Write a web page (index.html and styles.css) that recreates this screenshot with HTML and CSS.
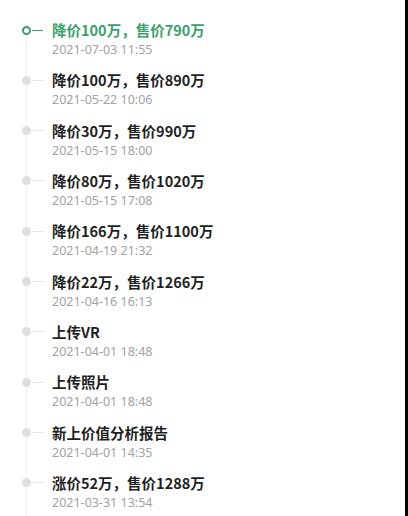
FILE: index.html
```html
<!DOCTYPE html>
<html lang="zh-CN">
<head>
<meta charset="utf-8">
<link rel="stylesheet" href="styles.css">
</head>
<body>
<div class="screen">
  <ul class="timeline">
    <li class="item current">
      <div class="rail"><div class="marker"><span class="node"></span><span class="dash"></span></div></div>
      <div class="content"><div class="title">降价100万，售价790万</div><div class="date">2021-07-03 11:55</div></div>
    </li>
    <li class="item">
      <div class="rail"><div class="marker"><span class="node"></span><span class="dash"></span></div></div>
      <div class="content"><div class="title">降价100万，售价890万</div><div class="date">2021-05-22 10:06</div></div>
    </li>
    <li class="item">
      <div class="rail"><div class="marker"><span class="node"></span><span class="dash"></span></div></div>
      <div class="content"><div class="title">降价30万，售价990万</div><div class="date">2021-05-15 18:00</div></div>
    </li>
    <li class="item">
      <div class="rail"><div class="marker"><span class="node"></span><span class="dash"></span></div></div>
      <div class="content"><div class="title">降价80万，售价1020万</div><div class="date">2021-05-15 17:08</div></div>
    </li>
    <li class="item">
      <div class="rail"><div class="marker"><span class="node"></span><span class="dash"></span></div></div>
      <div class="content"><div class="title">降价166万，售价1100万</div><div class="date">2021-04-19 21:32</div></div>
    </li>
    <li class="item">
      <div class="rail"><div class="marker"><span class="node"></span><span class="dash"></span></div></div>
      <div class="content"><div class="title">降价22万，售价1266万</div><div class="date">2021-04-16 16:13</div></div>
    </li>
    <li class="item">
      <div class="rail"><div class="marker"><span class="node"></span><span class="dash"></span></div></div>
      <div class="content"><div class="title">上传VR</div><div class="date">2021-04-01 18:48</div></div>
    </li>
    <li class="item">
      <div class="rail"><div class="marker"><span class="node"></span><span class="dash"></span></div></div>
      <div class="content"><div class="title">上传照片</div><div class="date">2021-04-01 18:48</div></div>
    </li>
    <li class="item">
      <div class="rail"><div class="marker"><span class="node"></span><span class="dash"></span></div></div>
      <div class="content"><div class="title">新上价值分析报告</div><div class="date">2021-04-01 14:35</div></div>
    </li>
    <li class="item">
      <div class="rail"><div class="marker"><span class="node"></span><span class="dash"></span></div></div>
      <div class="content"><div class="title">涨价52万，售价1288万</div><div class="date">2021-03-31 13:54</div></div>
    </li>
  </ul>
</div>
</body>
</html>
```
FILE: styles.css
```css
html, body {
  margin: 0;
  padding: 0;
  background: #fff;
}
.screen {
  width: 405px;
  height: 516px;
  border-right: 3px solid #000;
  overflow: hidden;
  background: #fff;
}
.timeline {
  list-style: none;
  margin: 0;
  padding: 20px 0 0 0;
}
.item {
  display: flex;
  height: 50.33px;
}
.rail {
  width: 52px;
  flex: none;
  background: linear-gradient(#f0f0f0, #f0f0f0) no-repeat 26px 0 / 1px 100%;
}
.current .rail {
  background-position: 26px 15px;
}
.marker {
  height: 20px;
  display: flex;
  align-items: center;
  padding-left: 22px;
}
.node {
  width: 9px;
  height: 9px;
  border-radius: 50%;
  background: #dfdfdf;
  box-sizing: border-box;
  flex: none;
}
.dash {
  width: 11px;
  height: 1px;
  margin-left: 2px;
  background: #e5e5e5;
}
.current .node {
  background: #fff;
  border: 2px solid #3d9f6c;
}
.current .dash {
  background: #3d9f6c;
  margin-left: 1px;
}
.content {
  display: flex;
  flex-direction: column;
}
.title {
  font-family: "Noto Sans CJK SC", sans-serif;
  font-weight: 700;
  font-size: 14.5px;
  line-height: 20px;
  color: #1f1f1f;
}
.current .title {
  color: #3d9f6c;
}
.date {
  margin-top: 1px;
  font-family: "Noto Sans", "Noto Sans CJK SC", sans-serif;
  font-size: 12.5px;
  line-height: 18px;
  color: #a2a2a2;
}
```
